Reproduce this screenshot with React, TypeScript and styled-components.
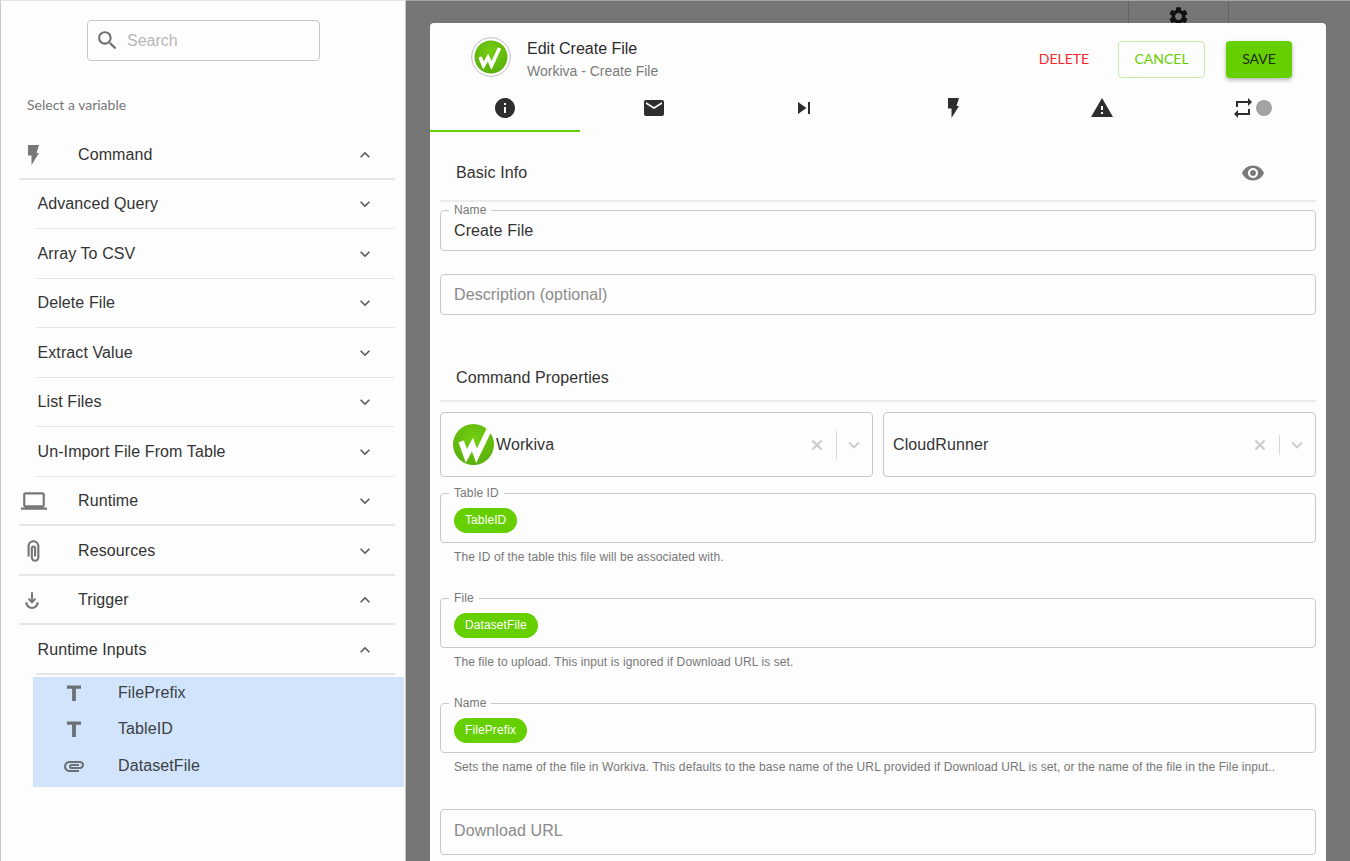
import React from "react";
import styled, { createGlobalStyle } from "styled-components";
import {
  MdAttachment,
  MdEmail,
  MdInfo,
  MdKeyboardArrowDown,
  MdKeyboardArrowUp,
  MdLaptop,
  MdRepeat,
  MdSearch,
  MdSettings,
  MdSkipNext,
  MdVisibility,
  MdWarning,
} from "react-icons/md";

const GREEN = "#66cf00";
const SANS = `"Liberation Sans", Arial, sans-serif`;

const GlobalStyle = createGlobalStyle`
  html, body {
    margin: 0;
    padding: 0;
    height: 100%;
    overflow: hidden;
    background: #fdfdfd;
    font-family: ${SANS};
  }
  * { box-sizing: border-box; }
`;

const Page = styled.div`
  display: flex;
  width: 1350px;
  height: 861px;
  overflow: hidden;
`;

const Sidebar = styled.aside`
  flex: 0 0 406px;
  height: 861px;
  background: #fdfdfd;
  border-left: 1px solid #c9c9c9;
  border-top: 1px solid #e4e4e4;
  border-right: 1px solid #c4c4c4;
  padding: 19px 0 0 18px;
`;

const SearchBox = styled.div`
  display: flex;
  align-items: center;
  width: 233px;
  height: 41px;
  margin-left: 68px;
  padding-left: 7px;
  border: 1px solid #c8c8c8;
  border-radius: 4px;
  color: #6f6f6f;
  font-size: 16px;
  svg { font-size: 25px; }
`;

const SearchHint = styled.span`
  margin-left: 7px;
  color: #b7b7b7;
`;

const VariableHint = styled.div`
  margin: 34px 0 0 8px;
  height: 20px;
  line-height: 20px;
  font-family: Lato, sans-serif;
  font-size: 14px;
  color: #777;
`;

const Row = styled.div<{ $nested?: boolean; $thick?: boolean; $first?: boolean }>`
  display: flex;
  align-items: center;
  height: 49.5px;
  margin-top: ${(p) => (p.$first ? "15px" : "0")};
  margin-left: ${(p) => (p.$nested ? "17px" : "0")};
  width: ${(p) => (p.$nested ? "359px" : "376px")};
  padding: ${(p) => (p.$thick ? "2px" : "1px")} 20px 0 ${(p) => (p.$nested ? "1.5px" : "0")};
  border-bottom: ${(p) => (p.$thick ? "2px" : "1px")} solid #e6e6e6;
  color: #333;
  font-size: 16px;
  letter-spacing: 0.1px;
`;

const RowIcon = styled.span`
  flex: 0 0 59px;
  display: flex;
  align-items: center;
  padding-left: 2px;
  color: #777;
  font-size: 24px;
`;

const RowLabel = styled.span`
  flex: 1;
`;

const Chevron = styled.span`
  display: flex;
  color: #5c5c5c;
  font-size: 20px;
`;

const VariableList = styled.div`
  width: 371px;
  height: 110px;
  margin: 2px 0 0 14px;
  background: #d2e4fb;
`;

const VariableRow = styled.div`
  display: flex;
  align-items: center;
  height: 36.6px;
  padding-bottom: 4px;
  color: #3a3f45;
  font-size: 16px;
  letter-spacing: 0.1px;
`;

const VariableIcon = styled.span`
  flex: 0 0 85px;
  display: flex;
  justify-content: center;
  padding-right: 3px;
  color: #6b7075;
  font-size: 24px;
`;

const Backdrop = styled.main`
  position: relative;
  flex: 1;
  height: 861px;
  padding: 23px 24px 0 24px;
  background: #767676;
  border-top: 1px solid #a5a5a5;
  overflow: hidden;
`;

const BackTab = styled.div`
  position: absolute;
  top: -1px;
  left: 722px;
  width: 101px;
  height: 23px;
  display: flex;
  justify-content: center;
  padding-top: 5px;
  border-left: 1px solid #626262;
  border-right: 1px solid #626262;
  color: #111;
  font-size: 23px;
`;

const Modal = styled.section`
  position: relative;
  width: 896px;
  height: 840px;
  margin-top: -1px;
  background: #fdfdfd;
  border-radius: 4px 4px 0 0;
  overflow: hidden;
`;

const ModalHeader = styled.header`
  display: flex;
  align-items: center;
  height: 62px;
  padding: 5px 34px 0 41px;
`;

const Titles = styled.div`
  flex: 1;
  margin: 6px 0 0 16px;
`;

const Title = styled.div`
  color: #2b2b2b;
  font-size: 16px;
  line-height: 22px;
`;

const Subtitle = styled.div`
  margin-top: 1px;
  color: #7b7b7b;
  font-size: 14px;
  line-height: 20px;
`;

const Action = styled.button<{ $kind: "delete" | "cancel" | "save" }>`
  height: 37px;
  padding: 0 0 3px;
  margin-top: 6px;
  border-radius: 4px;
  font-family: Lato, sans-serif;
  font-size: 14px;
  cursor: pointer;
  width: ${(p) => ({ delete: "74px", cancel: "87px", save: "66px" }[p.$kind])};
  margin-left: ${(p) => ({ delete: "0", cancel: "17px", save: "21px" }[p.$kind])};
  color: ${(p) => ({ delete: "#f9262d", cancel: GREEN, save: "#1d2a12" }[p.$kind])};
  background: ${(p) => (p.$kind === "save" ? GREEN : "transparent")};
  border: ${(p) => (p.$kind === "cancel" ? "1px solid #c5eca4" : "none")};
  box-shadow: ${(p) => (p.$kind === "save" ? "0 2px 4px rgba(0,0,0,.3)" : "none")};
`;

const Tabs = styled.nav`
  display: grid;
  grid-template-columns: 149.6px repeat(5, 149.3px);
  height: 47px;
`;

const Tab = styled.div<{ $active?: boolean }>`
  display: flex;
  justify-content: center;
  align-items: flex-start;
  gap: 1px;
  padding-top: 11px;
  color: #2e2e2e;
  font-size: 24px;
  border-bottom: 2px solid ${(p) => (p.$active ? GREEN : "transparent")};
`;

const StatusDot = styled.span`
  width: 16px;
  height: 16px;
  margin-top: 4px;
  border-radius: 50%;
  background: #a3a3a3;
`;

const Body = styled.div`
  padding: 0 10px;
`;

const SectionHead = styled.div<{ $top: number; $low?: boolean }>`
  display: flex;
  justify-content: space-between;
  align-items: center;
  height: 53px;
  margin-top: ${(p) => p.$top}px;
  padding: ${(p) => (p.$low ? "10px" : "0")} 51px 3px 16px;
  border-bottom: 2px solid #ececec;
  color: #333;
  font-size: 16px;
  letter-spacing: 0.1px;
  svg { display: block; color: #7a7a7a; font-size: 24px; }
`;

const Field = styled.div<{ $top: number; $height: number }>`
  position: relative;
  display: flex;
  align-items: center;
  height: ${(p) => p.$height}px;
  margin-top: ${(p) => p.$top}px;
  padding: 0 13px;
  border: 1px solid #c9c9c9;
  border-radius: 4px;
  color: #333;
  font-size: 16px;
  letter-spacing: 0.1px;
`;

const FloatLabel = styled.span`
  position: absolute;
  top: -7px;
  left: 8px;
  padding: 0 5px;
  background: #fdfdfd;
  color: #777;
  font-size: 12px;
  line-height: 13px;
`;

const Placeholder = styled.span<{ $raised?: boolean }>`
  margin-bottom: ${(p) => (p.$raised ? "3px" : "0")};
  color: #8a8a8a;
`;

const Pill = styled.span`
  height: 25px;
  padding: 0 11px;
  margin-top: 5px;
  border-radius: 13px;
  background: ${GREEN};
  color: #fff;
  font-size: 12px;
  line-height: 25px;
  letter-spacing: 0.1px;
`;

const Help = styled.div`
  margin: 7px 0 0 14px;
  height: 14px;
  color: #777;
  font-size: 12px;
  line-height: 14px;
  letter-spacing: 0.09px;
`;

const SelectRow = styled.div`
  display: grid;
  grid-template-columns: 1fr 1fr;
  gap: 10px;
  margin-top: 10px;
`;

const SelectBox = styled.div`
  display: flex;
  align-items: center;
  height: 65px;
  padding: 0 7px 0 12px;
  border: 1px solid #c9c9c9;
  border-radius: 4px;
  color: #333;
  font-size: 16px;
  letter-spacing: 0.1px;
`;

const SelectValue = styled.span<{ $plain?: boolean }>`
  flex: 1;
  display: flex;
  align-items: center;
  gap: 2px;
  margin-left: ${(p) => (p.$plain ? "-3px" : "0")};
`;

const SelectControls = styled.span`
  display: flex;
  align-items: center;
  color: #cbcbcb;
  svg { display: block; }
`;

const Separator = styled.span<{ $tall?: boolean }>`
  width: 1px;
  height: ${(p) => (p.$tall ? "28px" : "20px")};
  margin: 0 6px 0 13px;
  background: #d8d8d8;
`;

const BoltIcon = () => (
  <svg width="24" height="24" viewBox="0 0 24 24" fill="currentColor">
    <path d="M7 2h11l-2.500 8H18l-7.500 12v-9.500H7z" />
  </svg>
);

const TextIcon = () => (
  <svg width="24" height="24" viewBox="0 0 24 24" fill="currentColor">
    <path d="M5 4.500h14v3.300h-5.100V20h-3.800V7.800H5z" />
  </svg>
);

const TriggerIcon = () => (
  <svg width="22" height="22" viewBox="0 0 24 24" fill="none" stroke="currentColor" strokeWidth="2.200">
    <path d="M12 3.500v10M8.200 10.500l3.800 4 3.800-4" />
    <path d="M5.800 14.500a6.200 6.200 0 0 0 12.400 0" strokeWidth="2.400" />
  </svg>
);

const ClearIcon = () => (
  <svg width="12" height="12" viewBox="0 0 12 12" stroke="currentColor" strokeWidth="2.200">
    <path d="M1.500 1.500l9 9M10.500 1.500l-9 9" />
  </svg>
);

const VerticalClip = styled(MdAttachment)`
  transform: rotate(90deg);
`;

const Logo = ({ size, ring }: { size: number; ring?: boolean }) => (
  <svg width={size} height={size} viewBox="0 0 40 40">
    <defs>
      <radialGradient id={ring ? "logoRing" : "logoFlat"} cx="50%" cy="35%" r="70%">
        <stop offset="0%" stopColor="#74cf10" />
        <stop offset="100%" stopColor="#58ad0c" />
      </radialGradient>
    </defs>
    {ring && <circle cx="20" cy="20" r="19.300" fill="#fff" stroke="#bdbdbd" strokeWidth="1" />}
    <circle cx="20" cy="20" r={ring ? 16.500 : 20} fill={`url(#${ring ? "logoRing" : "logoFlat"})`} />
    <path
      d={ring ? "M9 20l3.500 8.500 4.500-8 3.500 8L28.500 11" : "M8 17l5 14 6-11 4 11L35 6"}
      fill="none"
      stroke="#fff"
      strokeWidth={ring ? 3.600 : 5.500}
    />
  </svg>
);

const groups = ["Advanced Query", "Array To CSV", "Delete File", "Extract Value", "List Files", "Un-Import File From Table"];

const Arrow = ({ open }: { open?: boolean }) => (
  <Chevron>{open ? <MdKeyboardArrowUp /> : <MdKeyboardArrowDown />}</Chevron>
);

const App = () => (
  <Page>
    <GlobalStyle />
    <Sidebar>
      <SearchBox>
        <MdSearch />
        <SearchHint>Search</SearchHint>
      </SearchBox>
      <VariableHint>Select a variable</VariableHint>
      <Row $thick $first>
        <RowIcon><BoltIcon /></RowIcon>
        <RowLabel>Command</RowLabel>
        <Arrow open />
      </Row>
      {groups.map((g) => (
        <Row $nested key={g}>
          <RowLabel>{g}</RowLabel>
          <Arrow />
        </Row>
      ))}
      <Row $thick>
        <RowIcon><MdLaptop size={26} /></RowIcon>
        <RowLabel>Runtime</RowLabel>
        <Arrow />
      </Row>
      <Row $thick>
        <RowIcon><VerticalClip size={26} /></RowIcon>
        <RowLabel>Resources</RowLabel>
        <Arrow />
      </Row>
      <Row $thick>
        <RowIcon><TriggerIcon /></RowIcon>
        <RowLabel>Trigger</RowLabel>
        <Arrow open />
      </Row>
      <Row $nested $thick>
        <RowLabel>Runtime Inputs</RowLabel>
        <Arrow open />
      </Row>
      <VariableList>
        <VariableRow><VariableIcon><TextIcon /></VariableIcon>FilePrefix</VariableRow>
        <VariableRow><VariableIcon><TextIcon /></VariableIcon>TableID</VariableRow>
        <VariableRow><VariableIcon><MdAttachment /></VariableIcon>DatasetFile</VariableRow>
      </VariableList>
    </Sidebar>
    <Backdrop>
      <BackTab><MdSettings /></BackTab>
      <Modal>
        <ModalHeader>
          <Logo size={40} ring />
          <Titles>
            <Title>Edit Create File</Title>
            <Subtitle>Workiva - Create File</Subtitle>
          </Titles>
          <Action $kind="delete">DELETE</Action>
          <Action $kind="cancel">CANCEL</Action>
          <Action $kind="save">SAVE</Action>
        </ModalHeader>
        <Tabs>
          <Tab $active><MdInfo /></Tab>
          <Tab><MdEmail /></Tab>
          <Tab><MdSkipNext /></Tab>
          <Tab><BoltIcon /></Tab>
          <Tab><MdWarning /></Tab>
          <Tab><MdRepeat /><StatusDot /></Tab>
        </Tabs>
        <Body>
          <SectionHead $top={17}>
            Basic Info
            <MdVisibility />
          </SectionHead>
          <Field $top={8} $height={41}>
            <FloatLabel>Name</FloatLabel>
            Create File
          </Field>
          <Field $top={23} $height={41}>
            <Placeholder>Description (optional)</Placeholder>
          </Field>
          <SectionHead $top={34} $low>Command Properties</SectionHead>
          <SelectRow>
            <SelectBox>
              <SelectValue><Logo size={41} />Workiva</SelectValue>
              <SelectControls>
                <ClearIcon />
                <Separator $tall />
                <MdKeyboardArrowDown size={22} />
              </SelectControls>
            </SelectBox>
            <SelectBox>
              <SelectValue $plain>CloudRunner</SelectValue>
              <SelectControls>
                <ClearIcon />
                <Separator />
                <MdKeyboardArrowDown size={22} />
              </SelectControls>
            </SelectBox>
          </SelectRow>
          <Field $top={16} $height={50}>
            <FloatLabel>Table ID</FloatLabel>
            <Pill>TableID</Pill>
          </Field>
          <Help>The ID of the table this file will be associated with.</Help>
          <Field $top={34} $height={50}>
            <FloatLabel>File</FloatLabel>
            <Pill>DatasetFile</Pill>
          </Field>
          <Help>The file to upload. This input is ignored if Download URL is set.</Help>
          <Field $top={34} $height={50}>
            <FloatLabel>Name</FloatLabel>
            <Pill>FilePrefix</Pill>
          </Field>
          <Help>Sets the name of the file in Workiva. This defaults to the base name of the URL provided if Download URL is set, or the name of the file in the File input..</Help>
          <Field $top={35} $height={46}>
            <Placeholder $raised>Download URL</Placeholder>
          </Field>
        </Body>
      </Modal>
    </Backdrop>
  </Page>
);

export default App;
